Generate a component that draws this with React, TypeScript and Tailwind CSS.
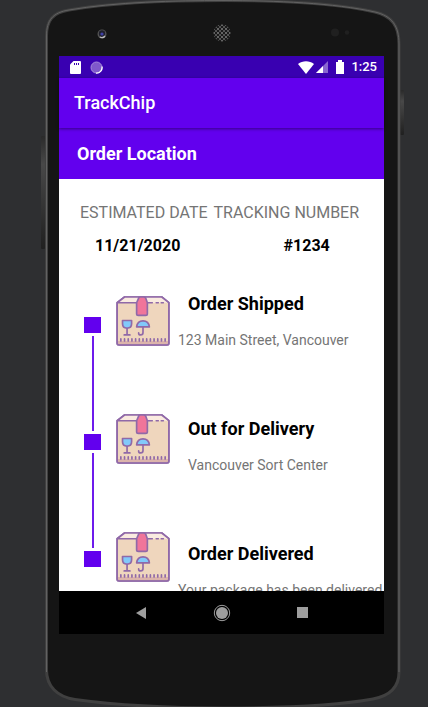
import React from "react";

function DeviceFrame() {
  return (
    <svg
      className="absolute inset-0 h-full w-full overflow-visible"
      viewBox="0 0 355 707"
      preserveAspectRatio="none"
      aria-hidden="true"
    >
      <defs>
        <pattern id="mesh" width="4" height="4" patternUnits="userSpaceOnUse">
          <rect width="4" height="4" fill="#1a1a1a" />
          <circle cx="1" cy="1" r="1" fill="#7d7d7d" />
          <circle cx="3" cy="3" r="1" fill="#666666" />
        </pattern>
        <linearGradient id="key" x1="0" y1="0" x2="0" y2="1">
          <stop offset="0" stopColor="#2a2a2a" />
          <stop offset="0.25" stopColor="#484848" />
          <stop offset="1" stopColor="#202020" />
        </linearGradient>
      </defs>
      <rect x="-4" y="136" width="4" height="113" rx="1" fill="url(#key)" />
      <rect x="355" y="90" width="4" height="45" rx="1" fill="url(#key)" />
      <path
        d="M1.5 36C1.5 20 8 12.500 24 10C70 2 130 .5 178 .5C230 .5 290 3 330 12C347 16 354 26 354 44V672C354 688 344 696 328 699C290 706 230 708 178 708C120 708 70 705 30 699.500C12 697 1.500 686 1.500 670Z"
        fill="#151515"
        stroke="#404040"
        strokeWidth="3"
      />
      <path
        d="M1.500 672V36C1.500 20 8 12.500 24 10C70 2 130 .5 178 .5C230 .5 290 3 330 12C347 16 354 26 354 44V672"
        fill="none"
        stroke="#626262"
        strokeWidth="1"
      />
      <circle cx="57" cy="34" r="4.500" fill="#555555" />
      <circle cx="57" cy="33.500" r="3.200" fill="#20202c" />
      <circle cx="57" cy="34" r="1.600" fill="#4142a8" />
      <path d="M55 37a4 4 0 0 0 5-1" fill="none" stroke="#bdbdbd" strokeWidth="1.200" />
      <circle cx="177" cy="33" r="8.500" fill="url(#mesh)" />
      <circle cx="290" cy="32.500" r="4" fill="#202020" />
      <circle cx="302" cy="32.500" r="2.200" fill="#202020" />
    </svg>
  );
}

function StatusBar() {
  return (
    <div className="flex h-[22px] shrink-0 items-center bg-[#3900b1] pr-[7px] pl-[11px] text-white">
      <svg className="h-[13px] w-[11px]" viewBox="0 0 11 13" role="img" aria-label="SD card">
        <path d="M3.500 0H10a1 1 0 0 1 1 1v11a1 1 0 0 1-1 1H1a1 1 0 0 1-1-1V3.500Z" fill="#fff" />
        <path d="M4.500 2v2M6.500 2v2M8.500 2v2" stroke="#3900b1" />
      </svg>
      <svg className="ml-[9px] h-[13px] w-[13px]" viewBox="0 0 13 13" aria-hidden="true">
        <circle cx="6.500" cy="6.500" r="5.500" fill="#8058cb" stroke="#a78bdb" />
        <path d="M12 5.500A5.700 5.700 0 0 1 6 12.200" fill="none" stroke="#fff" strokeWidth="1.300" />
      </svg>
      <svg className="ml-auto h-[13px] w-4" viewBox="0 0 16 13" role="img" aria-label="Wi-Fi">
        <path d="M0 3C4.500-.6 11.500-.6 16 3L8 13Z" fill="#fff" />
      </svg>
      <svg className="ml-[2px] h-[12px] w-[12px]" viewBox="0 0 12 12" role="img" aria-label="Signal">
        <path d="M12 0V12H0Z" fill="#8866d0" />
        <path d="M7 5V12H0Z" fill="#fff" />
      </svg>
      <svg className="ml-2 h-[14px] w-2" viewBox="0 0 8 14" role="img" aria-label="Battery">
        <path d="M2 0H6V2H8V14H0V2H2Z" fill="#fff" />
      </svg>
      <span className="ml-[7px] text-[13px] leading-4 font-medium">1:25</span>
    </div>
  );
}

function PackageIcon() {
  return (
    <svg className="h-[50px] w-[54px]" viewBox="0 0 160 149" aria-hidden="true">
      <g stroke="#9069a8" strokeWidth="5" strokeLinecap="round" strokeLinejoin="round">
        <path d="M3 20L25 3H136L157 20V141Q157 146 151 146H9Q3 146 3 141Z" fill="#efd6bd" />
        <path d="M4 20L25 3H136L156 20Z" fill="#faebe0" stroke="none" />
        <path d="M5 134H155V144H5Z" fill="#dcb4ab" stroke="none" />
        <path d="M3 20L25 3H136L157 20V141Q157 146 151 146H9Q3 146 3 141Z" fill="none" />
        <path d="M4 20H108M119 20H126M134 20H141" fill="none" strokeWidth="4" />
        <path d="M68 4Q69 3 72 3H82Q86 3 88 6L93 20V53Q93 58 88 58H66Q61 58 61 53V20Z" fill="#f0759a" />
        <path d="M19 73H46V83Q46 96 32.500 96Q19 96 19 83Z" fill="#82c9fa" />
        <path d="M32.500 96V115M24 116H41" fill="none" />
        <path d="M61 92Q63 74 80 74Q97 74 99 92Z" fill="#82c9fa" />
        <path d="M80 92V109Q80 116 73 116Q67 116 67 110" fill="none" />
        <path
          d="M14 128V134M25 128V134M36 128V134M47 128V134M58 128V134M69 128V134M80 128V134M91 128V134M102 128V134M113 128V134M124 128V134M135 128V134M146 128V134"
          fill="none"
        />
      </g>
    </svg>
  );
}

function Marker() {
  return <span className="h-4 w-[17px] shrink-0 bg-[#6200ee]" />;
}

function Connector() {
  return <span className="my-[3px] h-[95px] w-[2px] shrink-0 bg-[#6d1bec]" />;
}

const steps = [
  { title: "Order Shipped", detail: "123 Main Street, Vancouver", indent: "pl-1" },
  { title: "Out for Delivery", detail: "Vancouver Sort Center", indent: "pl-[14px]" },
  { title: "Order Delivered", detail: "Your package has been delivered", indent: "pl-1" },
];

export default function App() {
  return (
    <div className="h-screen overflow-hidden bg-[#2e2f31] pr-[28px] pl-[45px] font-['Roboto',sans-serif]">
      <div className="relative flex h-full flex-col pt-14 pr-4 pb-[73px] pl-[14px]">
        <DeviceFrame />
        <div className="relative flex min-h-0 flex-1 flex-col bg-white">
          <StatusBar />
          <header className="relative flex h-[50px] shrink-0 items-center bg-[#6200ee] px-[15px] text-white shadow-[0_1px_3px_rgba(0,0,0,0.45)]">
            <span className="text-[18px] leading-6 font-medium">TrackChip</span>
          </header>
          <div className="flex h-[51px] shrink-0 items-center bg-[#6200ee] px-[18px] text-white">
            <h1 className="text-[18px] leading-6 font-bold">Order Location</h1>
          </div>
          <main className="min-h-0 flex-1 overflow-hidden pt-6">
            <dl className="flex gap-[6px] pl-[21px] text-[16px] leading-5 whitespace-nowrap">
              <div>
                <dt className="text-[#757575]">ESTIMATED DATE</dt>
                <dd className="mt-[13px] pl-[15px] font-bold text-black">11/21/2020</dd>
              </div>
              <div>
                <dt className="text-[#757575]">TRACKING NUMBER</dt>
                <dd className="mt-[13px] pl-[70px] font-bold text-black">#1234</dd>
              </div>
            </dl>
            <div className="mt-9 flex pl-[25px]">
              <div className="flex w-[17px] flex-col items-center pt-[25px]" aria-hidden="true">
                <Marker />
                <Connector />
                <Marker />
                <Connector />
                <Marker />
              </div>
              <div className="ml-[15px] flex flex-col gap-[68px] pt-1">
                <PackageIcon />
                <PackageIcon />
                <PackageIcon />
              </div>
              <ol className="ml-1 flex min-w-0 flex-1 flex-col gap-[67px] whitespace-nowrap">
                {steps.map((step) => (
                  <li key={step.title}>
                    <h2 className="pl-[14px] text-[18px] leading-6 font-bold text-black">{step.title}</h2>
                    <p className={"mt-[14px] text-[14px] leading-5 text-[#757575] " + step.indent}>{step.detail}</p>
                  </li>
                ))}
              </ol>
            </div>
          </main>
          <nav className="flex h-[43px] shrink-0 items-center justify-center gap-[63px] bg-black">
            <button type="button" aria-label="Back" className="flex w-[18px] justify-center">
              <svg className="h-3 w-[10px]" viewBox="0 0 10 12">
                <path d="M10 0V12L0 6Z" fill="#9e9e9e" />
              </svg>
            </button>
            <button type="button" aria-label="Home">
              <svg className="h-[18px] w-[18px]" viewBox="0 0 18 18">
                <circle cx="9" cy="9" r="7.700" fill="none" stroke="#9e9e9e" />
                <circle cx="9" cy="9" r="6" fill="#9e9e9e" />
              </svg>
            </button>
            <button type="button" aria-label="Overview" className="flex w-[18px] justify-center">
              <svg className="h-[11px] w-[11px]" viewBox="0 0 11 11">
                <rect width="11" height="11" fill="#9e9e9e" />
              </svg>
            </button>
          </nav>
        </div>
      </div>
    </div>
  );
}
